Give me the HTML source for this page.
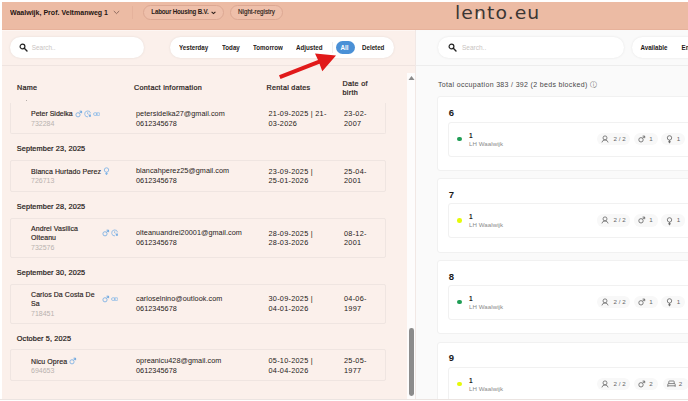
<!DOCTYPE html>
<html><head><meta charset="utf-8">
<style>
*{margin:0;padding:0;box-sizing:border-box}
html,body{width:688px;height:401px;overflow:hidden;background:#fff}
body{font-family:"Liberation Sans",sans-serif;color:#1f1a18;position:relative;font-size:7px;line-height:1.2}
.a{position:absolute;white-space:nowrap}
#hdr{left:2px;top:2px;width:686px;height:28px;background:#ecbba4}
#left{left:2px;top:30px;width:413px;height:369px;background:#fbf0eb}
#right{left:416px;top:30px;width:272px;height:369px;background:#fafafa}
#track{left:407.2px;top:73px;width:7.8px;height:326px;background:#fdfcfc}
#vline{left:415px;top:30px;width:1px;height:369px;background:#f1e8e5}
#bottom{left:2px;top:399px;width:686px;height:1px;background:#eee6e3}
.pill{background:#fff;border-radius:11px;box-shadow:0 0 2.5px rgba(0,0,0,.09)}
.hp{border:1px solid #dca893;border-radius:8px;height:14.4px;top:5.3px;font-size:6.2px;line-height:12.6px;text-align:center;color:#2a1c17;background:#eebfaa}
.b{font-weight:bold}
.f{font-size:6.2px;font-weight:bold;color:#1f1a18;top:43.7px;line-height:8px;transform:scaleY(1.14);transform-origin:50% 70%}
.th{font-size:7.2px;font-weight:normal;-webkit-text-stroke:.24px #2a2220;letter-spacing:.3px;color:#2a2220;line-height:9px}
.card{border:1px solid #efe5e1;border-radius:2px;left:10px;width:376px}
.dh{left:16.8px;font-size:7.3px;font-weight:normal;-webkit-text-stroke:.22px #1f1a18;letter-spacing:.13px;line-height:9px}
.nm{left:31px;letter-spacing:.08px;font-size:7px;line-height:9px;color:#2a2220;-webkit-text-stroke:.15px #2a2220}
.id{left:31px;font-size:7px;line-height:9px;color:#b9b2af}
.c2{left:136px;font-size:7.25px;line-height:9.9px;letter-spacing:.05px;color:#1f1a18;white-space:pre}
.c3{left:268.5px;font-size:7.3px;line-height:9.8px;letter-spacing:.27px;color:#1f1a18;white-space:pre}
.c4{left:344px;font-size:7.3px;line-height:9.8px;letter-spacing:.27px;color:#1f1a18;white-space:pre}
.rc{left:437.4px;width:260px;height:75px;background:#fff;border:1px solid #f1f1f1;border-radius:3px}
.ri{left:447.6px;width:250px;height:35px;background:#fff;border:1px solid #f1f1f1;border-radius:3px}
.rn{left:448.8px;font-size:9.5px;font-weight:bold;line-height:10px;color:#1a1a1a}
.dot{width:4.6px;height:4.6px;border-radius:50%;left:457.2px;margin-top:.4px}
.r1{left:469px;font-size:6.5px;font-weight:bold;line-height:8px;color:#222}
.r2{left:469px;font-size:6.1px;letter-spacing:.08px;line-height:8px;color:#8a8a8a}
.bd{height:12.4px;margin-top:-.2px;border-radius:6.2px;background:#f8f8f8;font-size:6.2px;line-height:12px;color:#666;text-align:right;padding-right:4.8px}
</style></head><body>
<div class="a" id="hdr"></div>
<div class="a" id="left"></div>
<div class="a" id="right"></div>
<div class="a" id="track"></div>
<div class="a" id="vline"></div>
<div class="a" id="bottom"></div>
<div class="a" style="left:2px;top:29.2px;width:686px;height:1px;background:#e7b29b"></div>
<div class="a" style="left:2px;top:30.2px;width:413px;height:1.2px;background:#fdf6f3"></div>

<!-- header -->
<div class="a b" style="left:10px;top:7.5px;font-size:7.05px;line-height:9px;color:#1f1512;transform:scaleY(1.08);transform-origin:50% 75%">Waalwijk, Prof. Veltmanweg 1</div>
<svg class="a" style="left:113.3px;top:10px" width="7" height="5" viewBox="0 0 7 5"><path d="M0.8 1 L3.5 3.6 L6.2 1" fill="none" stroke="#7a5b50" stroke-width="0.8"/></svg>
<div class="a" style="left:132px;top:6px;width:1px;height:13px;background:#e5b29c"></div>
<div class="a hp b" style="left:143px;width:81px"><span style="position:relative;left:-3.6px;letter-spacing:-.18px;display:inline-block;transform:scaleY(1.12);transform-origin:50% 70%">Labour Housing B.V.</span><svg style="position:absolute;left:67.3px;top:5.2px" width="5" height="4" viewBox="0 0 5 4"><path d="M0.6 0.8 L2.5 2.6 L4.4 0.8" fill="none" stroke="#2a1c17" stroke-width="1.1"/></svg></div>
<div class="a hp" style="left:230px;width:53px;-webkit-text-stroke:.15px #2a1c17"><span style="display:inline-block;transform:scaleY(1.14);transform-origin:50% 70%">Night-registry</span></div>
<div class="a" style="left:454.8px;top:3px;font-family:'DejaVu Sans','Liberation Sans',sans-serif;font-size:17.5px;line-height:21px;color:#3b3634;letter-spacing:1px;transform:scaleX(1.075);transform-origin:0 0">lento.eu</div>
<svg class="a" style="left:477.2px;top:10.6px" width="5.4" height="8" viewBox="0 0 6 9"><path d="M1 8.4 L1 4.5 Q1.2 1.2 4.6 0.8 Q3.6 3 3.6 8.4 Z" fill="#fdf3ee"/></svg>

<!-- filter bar -->
<div class="a" style="left:2px;top:65px;width:413px;height:1px;background:#efe4e0"></div><div class="a" style="left:416px;top:65px;width:272px;height:1px;background:#ededed"></div>
<div class="a pill" style="left:10px;top:37px;width:134px;height:21px"></div>
<svg class="a" style="left:18.6px;top:42.7px" width="9" height="9" viewBox="0 0 9 9"><circle cx="3.5" cy="3.5" r="2.4" fill="none" stroke="#222" stroke-width="1.2"/><path d="M5.3 5.3 L8 8" stroke="#222" stroke-width="1.4" stroke-linecap="round"/></svg>
<div class="a" style="left:31.8px;top:44px;font-size:6.4px;line-height:8px;color:#c9c4c2">Search..</div>
<div class="a pill" style="left:170px;top:37px;width:224px;height:21px"></div>
<div class="a f" style="left:179px">Yesterday</div>
<div class="a f" style="left:222px">Today</div>
<div class="a f" style="left:253px">Tomorrow</div>
<div class="a f" style="left:296px">Adjusted</div>
<div class="a" style="left:332px;top:42px;width:1px;height:11px;background:#eeeeee"></div>
<div class="a" style="left:335.6px;top:40.6px;width:19px;height:13.7px;border-radius:7px;background:#4a90d6"></div>
<div class="a f" style="left:340.5px;color:#fff">All</div>
<div class="a f" style="left:362px">Deleted</div>

<div class="a pill" style="left:438px;top:37px;width:186px;height:21px"></div>
<svg class="a" style="left:447.6px;top:42.5px" width="9" height="9" viewBox="0 0 9 9"><circle cx="3.5" cy="3.5" r="2.4" fill="none" stroke="#222" stroke-width="1.2"/><path d="M5.3 5.3 L8 8" stroke="#222" stroke-width="1.4" stroke-linecap="round"/></svg>
<div class="a" style="left:462px;top:44px;font-size:6.5px;line-height:8px;color:#c9c4c2">Search..</div>
<div class="a pill" style="left:631.5px;top:37px;width:80px;height:21px"></div>
<div class="a f" style="left:640.5px">Available</div>
<div class="a f" style="left:681.5px">Em</div>

<!-- table header -->
<div class="a th" style="left:17px;top:83px">Name</div>
<div class="a th" style="left:134px;top:83px">Contact information</div>
<div class="a th" style="left:266.5px;top:83px">Rental dates</div>
<div class="a th" style="left:342.5px;top:78.5px;line-height:9.5px">Date of<br>birth</div>
<svg class="a" style="left:408px;top:75px" width="7" height="6" viewBox="0 0 7 6"><path d="M0.5 5 L3.5 1 L6.5 5 Z" fill="#8a8a8a"/></svg>
<div class="a" style="left:409.2px;top:328.4px;width:4.8px;height:68px;border-radius:2.4px;background:#8c8c8c"></div>

<!-- rows -->
<div class="a" style="left:25.5px;top:100px;width:1.5px;height:1px;background:#8a8380;opacity:.6"></div>
<div class="a card" style="top:103px;height:31px;border-top:0;border-radius:0 0 2px 2px"></div>
<div class="a nm" style="top:109px;letter-spacing:0">Peter Sidelka</div>
<div class="a id" style="top:118.5px">732284</div>
<div class="a c2" style="top:108.8px">petersidelka27@gmail.com
0612345678</div>
<div class="a c3" style="top:108.9px">21-09-2025 | 21-
03-2026</div>
<div class="a c4" style="top:108.9px">23-02-
2007</div>

<div class="a dh" style="top:144px">September 23, 2025</div>
<div class="a card" style="top:160px;height:31.5px"></div>
<div class="a nm" style="top:166.5px">Blanca Hurtado Perez</div>
<div class="a id" style="top:176px">726713</div>
<div class="a c2" style="top:166.3px">blancahperez25@gmail.com
0612345678</div>
<div class="a c3" style="top:167.4px;line-height:9px">23-09-2025 |
25-01-2026</div>
<div class="a c4" style="top:167.4px;line-height:9px">25-04-
2001</div>

<div class="a dh" style="top:201.5px">September 28, 2025</div>
<div class="a card" style="top:218px;height:39.5px"></div>
<div class="a nm" style="top:224.2px">Andrei Vasilica<br>Olteanu</div>
<div class="a id" style="top:242.5px">732576</div>
<div class="a c2" style="top:228.3px">olteanuandrei20001@gmail.com
0612345678</div>
<div class="a c3" style="top:229.4px;line-height:9px">28-09-2025 |
28-03-2026</div>
<div class="a c4" style="top:229.4px;line-height:9px">08-12-
2001</div>

<div class="a dh" style="top:267.5px">September 30, 2025</div>
<div class="a card" style="top:284px;height:39.5px"></div>
<div class="a nm" style="top:290px">Carlos Da Costa De<br>Sa</div>
<div class="a id" style="top:308.5px">718451</div>
<div class="a c2" style="top:294.3px">carloselnino@outlook.com
0612345678</div>
<div class="a c3" style="top:294.4px">30-09-2025 |
04-01-2026</div>
<div class="a c4" style="top:294.4px">04-06-
1997</div>

<div class="a dh" style="top:333.5px">October 5, 2025</div>
<div class="a card" style="top:349px;height:31.5px"></div>
<div class="a nm" style="top:356.5px">Nicu Oprea</div>
<div class="a id" style="top:366px">694653</div>
<div class="a c2" style="top:355.8px">opreanicu428@gmail.com
0612345678</div>
<div class="a c3" style="top:355.9px">05-10-2025 |
04-04-2026</div>
<div class="a c4" style="top:355.9px">25-05-
1977</div>


<!-- icons -->
<svg class="a" style="left:74.8px;top:109.8px" width="8" height="8" viewBox="0 0 8 8"><circle cx="3" cy="4.8" r="2.1" fill="none" stroke="#78afe4" stroke-width="0.85"/><path d="M4.5 3.3 L6.3 1.5 M4.6 1.2 H6.6 V3.2" fill="none" stroke="#5f9fde" stroke-width="0.9"/></svg><svg class="a" style="left:83.5px;top:110px" width="8" height="8" viewBox="0 0 8 8"><path d="M6.6 3.2 A3 3 0 1 0 4 6.9" fill="none" stroke="#80b4e6" stroke-width="0.8"/><path d="M3.7 2.2 V4 L4.6 4.9" fill="none" stroke="#80b4e6" stroke-width="0.8"/><rect x="4.9" y="5" width="2" height="1.8" fill="#7ab0e4"/><path d="M5.3 5 V4.5 A0.6 0.6 0 0 1 6.5 4.5 V5" fill="none" stroke="#7ab0e4" stroke-width="0.45"/></svg><svg class="a" style="left:92.8px;top:111.7px" width="7.6" height="4.2" viewBox="0 0 9 5"><rect x="0.6" y="0.9" width="4.4" height="3.2" rx="1.6" fill="none" stroke="#86b8e8" stroke-width="0.95"/><rect x="4" y="0.9" width="4.4" height="3.2" rx="1.6" fill="none" stroke="#86b8e8" stroke-width="0.95"/></svg><svg class="a" style="left:102.5px;top:167.3px" width="7" height="9" viewBox="0 0 7 9"><circle cx="3.5" cy="3" r="2.2" fill="none" stroke="#80b4e6" stroke-width="0.85"/><path d="M3.5 5.2 V8 M2.1 6.7 H4.9" fill="none" stroke="#80b4e6" stroke-width="0.9"/></svg><svg class="a" style="left:101.5px;top:228.9px" width="8" height="8" viewBox="0 0 8 8"><circle cx="3" cy="4.8" r="2.1" fill="none" stroke="#78afe4" stroke-width="0.85"/><path d="M4.5 3.3 L6.3 1.5 M4.6 1.2 H6.6 V3.2" fill="none" stroke="#5f9fde" stroke-width="0.9"/></svg><svg class="a" style="left:110.7px;top:229.2px" width="8" height="8" viewBox="0 0 8 8"><path d="M6.6 3.2 A3 3 0 1 0 4 6.9" fill="none" stroke="#80b4e6" stroke-width="0.8"/><path d="M3.7 2.2 V4 L4.6 4.9" fill="none" stroke="#80b4e6" stroke-width="0.8"/><rect x="4.9" y="5" width="2" height="1.8" fill="#7ab0e4"/><path d="M5.3 5 V4.5 A0.6 0.6 0 0 1 6.5 4.5 V5" fill="none" stroke="#7ab0e4" stroke-width="0.45"/></svg><svg class="a" style="left:101.5px;top:294.6px" width="8" height="8" viewBox="0 0 8 8"><circle cx="3" cy="4.8" r="2.1" fill="none" stroke="#78afe4" stroke-width="0.85"/><path d="M4.5 3.3 L6.3 1.5 M4.6 1.2 H6.6 V3.2" fill="none" stroke="#5f9fde" stroke-width="0.9"/></svg><svg class="a" style="left:110.89999999999999px;top:296.7px" width="7.6" height="4.2" viewBox="0 0 9 5"><rect x="0.6" y="0.9" width="4.4" height="3.2" rx="1.6" fill="none" stroke="#86b8e8" stroke-width="0.95"/><rect x="4" y="0.9" width="4.4" height="3.2" rx="1.6" fill="none" stroke="#86b8e8" stroke-width="0.95"/></svg><svg class="a" style="left:69px;top:356.5px" width="8" height="8" viewBox="0 0 8 8"><circle cx="3" cy="4.8" r="2.1" fill="none" stroke="#78afe4" stroke-width="0.85"/><path d="M4.5 3.3 L6.3 1.5 M4.6 1.2 H6.6 V3.2" fill="none" stroke="#5f9fde" stroke-width="0.9"/></svg>
<!-- right -->
<div class="a" style="left:438px;top:80.5px;font-size:7px;line-height:8px;letter-spacing:.33px;color:#484848">Total occupation 383 / 392 (2 beds blocked) <span style="font-size:6.5px;color:#666;letter-spacing:0">&#9432;</span></div>

<div class="a rc" style="top:96px"></div>
<div class="a rn" style="top:108px">6</div>
<div class="a ri" style="top:122px"></div>
<div class="a dot" style="top:136.5px;background:#1f9d55"></div>
<div class="a r1" style="top:131.8px">1</div>
<div class="a r2" style="top:139.5px">LH Waalwijk</div>
<div class="a bd" style="left:596.8px;top:133px;width:33.6px"><svg style="position:absolute;left:4.5px;top:2px" width="8" height="8" viewBox="0 0 8 8"><circle cx="4" cy="2.9" r="2" fill="none" stroke="#686868" stroke-width="0.8"/><path d="M0.9 7.4 Q1.4 5 4 4.9 Q6.6 5 7.1 7.4" fill="none" stroke="#686868" stroke-width="0.8"/></svg>2 / 2</div>
<div class="a bd" style="left:634px;top:133px;width:23.5px"><svg style="position:absolute;left:3.5px;top:1.8px" width="8" height="8" viewBox="0 0 8 8"><circle cx="3" cy="4.8" r="2.2" fill="none" stroke="#686868" stroke-width="0.85"/><path d="M4.6 3.2 L6.4 1.4 M4.6 1.1 H6.7 V3.2" fill="none" stroke="#686868" stroke-width="0.9"/></svg>1</div>
<div class="a bd" style="left:661px;top:133px;width:24px"><svg style="position:absolute;left:4.6px;top:2.2px" width="7" height="9" viewBox="0 0 7 9"><circle cx="3.5" cy="2.9" r="2.2" fill="none" stroke="#686868" stroke-width="0.85"/><path d="M3.5 5.1 V8.2 M2.1 6.8 H4.9" fill="none" stroke="#686868" stroke-width="0.9"/></svg>1</div>

<div class="a rc" style="top:178px"></div>
<div class="a rn" style="top:190px">7</div>
<div class="a ri" style="top:203px"></div>
<div class="a dot" style="top:218px;background:#e5fa08"></div>
<div class="a r1" style="top:213.3px">1</div>
<div class="a r2" style="top:221px">LH Waalwijk</div>
<div class="a bd" style="left:596.8px;top:214.5px;width:33.6px"><svg style="position:absolute;left:4.5px;top:2px" width="8" height="8" viewBox="0 0 8 8"><circle cx="4" cy="2.9" r="2" fill="none" stroke="#686868" stroke-width="0.8"/><path d="M0.9 7.4 Q1.4 5 4 4.9 Q6.6 5 7.1 7.4" fill="none" stroke="#686868" stroke-width="0.8"/></svg>2 / 2</div>
<div class="a bd" style="left:634px;top:214.5px;width:23.5px"><svg style="position:absolute;left:3.5px;top:1.8px" width="8" height="8" viewBox="0 0 8 8"><circle cx="3" cy="4.8" r="2.2" fill="none" stroke="#686868" stroke-width="0.85"/><path d="M4.6 3.2 L6.4 1.4 M4.6 1.1 H6.7 V3.2" fill="none" stroke="#686868" stroke-width="0.9"/></svg>1</div>
<div class="a bd" style="left:661px;top:214.5px;width:24px"><svg style="position:absolute;left:4.6px;top:2.2px" width="7" height="9" viewBox="0 0 7 9"><circle cx="3.5" cy="2.9" r="2.2" fill="none" stroke="#686868" stroke-width="0.85"/><path d="M3.5 5.1 V8.2 M2.1 6.8 H4.9" fill="none" stroke="#686868" stroke-width="0.9"/></svg>1</div>

<div class="a rc" style="top:260px;height:74px"></div>
<div class="a rn" style="top:271.5px">8</div>
<div class="a ri" style="top:285px"></div>
<div class="a dot" style="top:299.5px;background:#1f9d55"></div>
<div class="a r1" style="top:294.8px">1</div>
<div class="a r2" style="top:302.5px">LH Waalwijk</div>
<div class="a bd" style="left:596.8px;top:296px;width:33.6px"><svg style="position:absolute;left:4.5px;top:2px" width="8" height="8" viewBox="0 0 8 8"><circle cx="4" cy="2.9" r="2" fill="none" stroke="#686868" stroke-width="0.8"/><path d="M0.9 7.4 Q1.4 5 4 4.9 Q6.6 5 7.1 7.4" fill="none" stroke="#686868" stroke-width="0.8"/></svg>2 / 2</div>
<div class="a bd" style="left:634px;top:296px;width:23.5px"><svg style="position:absolute;left:3.5px;top:1.8px" width="8" height="8" viewBox="0 0 8 8"><circle cx="3" cy="4.8" r="2.2" fill="none" stroke="#686868" stroke-width="0.85"/><path d="M4.6 3.2 L6.4 1.4 M4.6 1.1 H6.7 V3.2" fill="none" stroke="#686868" stroke-width="0.9"/></svg>1</div>
<div class="a bd" style="left:661px;top:296px;width:24px"><svg style="position:absolute;left:4.6px;top:2.2px" width="7" height="9" viewBox="0 0 7 9"><circle cx="3.5" cy="2.9" r="2.2" fill="none" stroke="#686868" stroke-width="0.85"/><path d="M3.5 5.1 V8.2 M2.1 6.8 H4.9" fill="none" stroke="#686868" stroke-width="0.9"/></svg>1</div>

<div class="a rc" style="top:342px"></div>
<div class="a rn" style="top:353px">9</div>
<div class="a ri" style="top:367px"></div>
<div class="a dot" style="top:381.5px;background:#e5fa08"></div>
<div class="a r1" style="top:376.8px">1</div>
<div class="a r2" style="top:384.5px">LH Waalwijk</div>
<div class="a bd" style="left:596.8px;top:378px;width:33.6px"><svg style="position:absolute;left:4.5px;top:2px" width="8" height="8" viewBox="0 0 8 8"><circle cx="4" cy="2.9" r="2" fill="none" stroke="#686868" stroke-width="0.8"/><path d="M0.9 7.4 Q1.4 5 4 4.9 Q6.6 5 7.1 7.4" fill="none" stroke="#686868" stroke-width="0.8"/></svg>2 / 2</div>
<div class="a bd" style="left:634px;top:378px;width:23.5px"><svg style="position:absolute;left:3.5px;top:1.8px" width="8" height="8" viewBox="0 0 8 8"><circle cx="3" cy="4.8" r="2.2" fill="none" stroke="#686868" stroke-width="0.85"/><path d="M4.6 3.2 L6.4 1.4 M4.6 1.1 H6.7 V3.2" fill="none" stroke="#686868" stroke-width="0.9"/></svg>2</div>
<div class="a bd" style="left:663px;top:378px;width:26px;padding-right:6.8px"><svg style="position:absolute;left:4px;top:2px" width="9" height="8" viewBox="0 0 9 8"><path d="M1.8 3.6 V1.6 Q1.8 1 2.4 1 H6.6 Q7.2 1 7.2 1.6 V3.6 M0.8 6.8 V4.3 Q0.8 3.6 1.5 3.6 H7.5 Q8.2 3.6 8.2 4.3 V6.8 M0.8 5.8 H8.2" fill="none" stroke="#686868" stroke-width="0.8"/></svg>2</div>

<div class="a" style="left:0;top:399px;width:688px;height:2px;background:#fff;border-top:1px solid #ebe4e1"></div>

<!-- arrow -->
<svg class="a" style="left:0;top:0" width="688" height="401" viewBox="0 0 688 401"><polygon points="279,75.3 318,60 315,53.4 336,55.5 322.3,71.2 319.5,63.7 280.5,79" fill="#e11a1a"/></svg>
</body></html>
